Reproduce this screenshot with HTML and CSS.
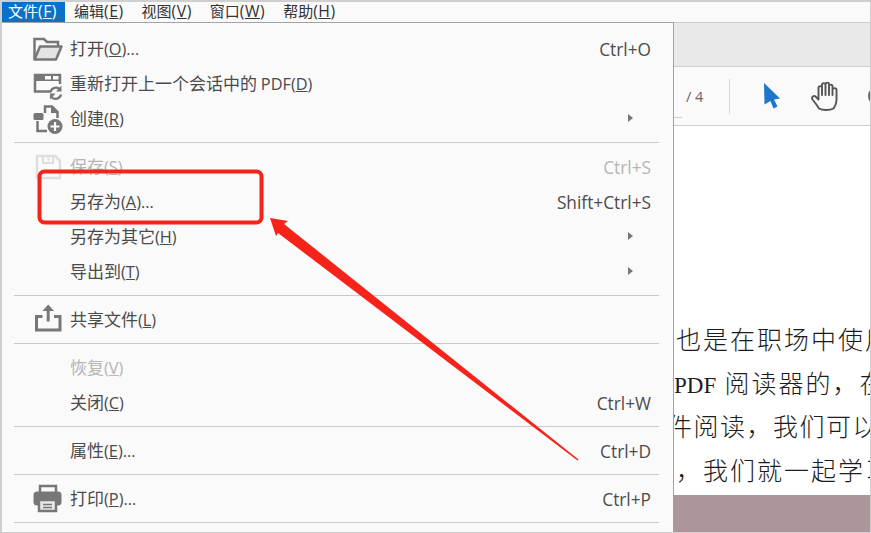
FILE: index.html
```html
<!DOCTYPE html>
<html lang="zh-CN">
<head>
    <meta charset="UTF-8">
    <title>文件菜单</title>
    <link rel="stylesheet" href="styles.css">
</head>
<body>
    <div class="window">
        <nav class="menubar">
            <span class="menubar-item active">文件<span class="key">(<u>F</u>)</span></span>
            <span class="menubar-item">编辑<span class="key">(<u>E</u>)</span></span>
            <span class="menubar-item">视图<span class="key">(<u>V</u>)</span></span>
            <span class="menubar-item">窗口<span class="key">(<u>W</u>)</span></span>
            <span class="menubar-item">帮助<span class="key">(<u>H</u>)</span></span>
        </nav>
        <div class="tab-strip"></div>
        <div class="toolbar">
            <div class="page-input"></div>
            <span class="page-total">/ 4</span>
            <div class="divider"></div>
            <svg class="tool-pointer" width="18" height="26" viewBox="0 0 18 26"><path d="M1 0 L17 15.5 L11 16.5 L14.5 23.5 L10.5 25.5 L7.5 18 L1.5 21.5 Z" fill="#1f74cc"/></svg>
            <svg class="tool-hand" width="30" height="30" viewBox="0 0 30 30"><path d="M8 27.5 C6 24 3.5 21 1.5 18.5 C0 16.5 2.5 14 4.5 15.5 L7.5 18.5 V7 C7.5 4.5 11 4.5 11 7 V14 V4 C11 1.5 14.5 1.5 14.5 4 V14 V3.5 C14.5 1 18 1 18 3.500 V14 V5.500 C18 3 21.500 3 21.500 5.500 V14 V9 C21.500 6.500 25.500 6.500 25.500 9 V19 C25.500 24 23.500 26 22.500 27.500 C19 29.500 11 29.500 8 27.500 Z" fill="none" stroke="#555" stroke-width="1.900" stroke-linejoin="round"/></svg>
            <svg class="tool-zoom" width="20" height="20" viewBox="0 0 20 20"><circle cx="10" cy="10" r="8" fill="none" stroke="#666" stroke-width="2"/></svg>
        </div>
        <div class="page">
            <div class="page-text">
                <p class="line line-a">也是在职场中使用</p>
                <p class="line line-b"><span class="latin">PDF</span> 阅读器的，在</p>
                <p class="line line-c">件阅读，我们可以</p>
                <p class="line line-d">，我们就一起学习</p>
            </div>
            <div class="page-photo"></div>
        </div>

        <div class="menu">
            <div class="row">
                <svg class="icon" viewBox="0 0 30 30"><path d="M1.500 24.500 V4 H11 L14 7 H25 V11" fill="none" stroke="#777" stroke-width="2.500"/><path d="M1.500 24.500 H23 L28.500 11.500 H7 Z" fill="#e4e4e4" stroke="#777" stroke-width="2.500" stroke-linejoin="round"/></svg>
                <span class="label">打开<span class="key">(<u>O</u>)...</span></span>
                <span class="shortcut">Ctrl+O</span>
            </div>
            <div class="row">
                <svg class="icon" viewBox="0 0 30 30"><path d="M18 21.500 H2 V5 H27 V14" fill="none" stroke="#777" stroke-width="2.500"/><path d="M2 5 H27 V11 H2 Z" fill="#777"/><path d="M12 6 H18 V9.500 H12 Z M20 6 H25.500 V9.500 H20 Z" fill="#fafafa"/><path d="M17.500 22 A5.500 5.500 0 0 1 27 19.500 M28 24.500 A5.500 5.500 0 0 1 18.500 27" fill="none" stroke="#777" stroke-width="2.300"/><path d="M28.500 15.500 V21.500 H23 Z M17 29.500 V23.500 H22.500 Z" fill="#777"/></svg>
                <span class="label">重新打开上一个会话中的 <span class="key">PDF(<u>D</u>)</span></span>
            </div>
            <div class="row">
                <svg class="icon" viewBox="0 0 30 30"><path d="M12 8 V1.500 H19 L24.500 7 V13" fill="none" stroke="#777" stroke-width="2.500"/><path d="M18 1 V8 H25 Z" fill="#777"/><rect x="0.500" y="8" width="10" height="7" rx="1.500" fill="#777"/><path d="M4.500 16 V26 H14" fill="none" stroke="#777" stroke-width="2.500"/><circle cx="22" cy="21.500" r="7.500" fill="#777"/><path d="M22 17 V26 M17.500 21.500 H26.500" stroke="#fafafa" stroke-width="2.200"/></svg>
                <span class="label">创建<span class="key">(<u>R</u>)</span></span>
                <span class="submenu-arrow"></span>
            </div>
            <div class="sep"></div>
            <div class="row disabled">
                <svg class="icon" viewBox="0 0 30 30"><path d="M4 3 H22 L27 8 V25 H4 Z" fill="none" stroke="#dedede" stroke-width="2.500" stroke-linejoin="round"/><path d="M10 3 V10 H20 V3 M15.500 5 V8" fill="none" stroke="#dedede" stroke-width="2"/></svg>
                <span class="label">保存<span class="key">(<u>S</u>)</span></span>
                <span class="shortcut">Ctrl+S</span>
            </div>
            <div class="row">
                <span class="icon"></span>
                <span class="label">另存为<span class="key">(<u>A</u>)...</span></span>
                <span class="shortcut">Shift+Ctrl+S</span>
            </div>
            <div class="row">
                <span class="icon"></span>
                <span class="label">另存为其它<span class="key">(<u>H</u>)</span></span>
                <span class="submenu-arrow"></span>
            </div>
            <div class="row">
                <span class="icon"></span>
                <span class="label">导出到<span class="key">(<u>T</u>)</span></span>
                <span class="submenu-arrow"></span>
            </div>
            <div class="sep"></div>
            <div class="row">
                <svg class="icon" viewBox="0 0 30 30"><path d="M9.500 10.500 H3.500 V24 H27 V10.500 H21" fill="none" stroke="#777" stroke-width="3"/><path d="M15.200 4 V15.500" stroke="#777" stroke-width="3"/><path d="M15.200 -1.500 L21 5 H9.500 Z" fill="#777"/></svg>
                <span class="label">共享文件<span class="key">(<u>L</u>)</span></span>
            </div>
            <div class="sep"></div>
            <div class="row disabled">
                <span class="icon"></span>
                <span class="label">恢复<span class="key">(<u>V</u>)</span></span>
            </div>
            <div class="row">
                <span class="icon"></span>
                <span class="label">关闭<span class="key">(<u>C</u>)</span></span>
                <span class="shortcut">Ctrl+W</span>
            </div>
            <div class="sep"></div>
            <div class="row">
                <span class="icon"></span>
                <span class="label">属性<span class="key">(<u>E</u>)...</span></span>
                <span class="shortcut">Ctrl+D</span>
            </div>
            <div class="sep"></div>
            <div class="row">
                <svg class="icon" viewBox="0 0 30 30"><path d="M7 8 V1 H23 V8" fill="none" stroke="#777" stroke-width="2.500"/><rect x="0.500" y="6.500" width="28" height="14" rx="3.500" fill="#777"/><path d="M6 15 H23 V26 H6 Z" fill="#e8e8e8" stroke="#777" stroke-width="2.500"/><path d="M10 19.500 H19 M10 22.500 H19" stroke="#777" stroke-width="1.400"/></svg>
                <span class="label">打印<span class="key">(<u>P</u>)...</span></span>
                <span class="shortcut">Ctrl+P</span>
            </div>
            <div class="sep"></div>
        </div>

        <!-- red annotation drawn over the screenshot -->
        <svg class="annotation" width="871" height="533" viewBox="0 0 871 533">
            <rect x="39.500" y="171.500" width="222" height="51" rx="5" fill="none" stroke="#f5231a" stroke-width="4"/>
            <path d="M270 218 L288 221 L284 224 L578.500 459.500 L577.500 460.500 L278 233 L276 236 Z" fill="#f5231a"/>
        </svg>
    </div>
</body>
</html>
```

FILE: styles.css
```css
* {
    box-sizing: border-box;
}

body {
    margin: 0;
    background: #fff;
    font-family: 'Noto Sans CJK SC', sans-serif;
    color: #4b4b4b;
}

.window {
    position: relative;
    width: 871px;
    height: 533px;
    display: flex;
    flex-direction: column;
    overflow: hidden;
    border-top: 2px solid #cfcfcf;
    border-left: 2px solid #cfcfcf;
    border-right: 1px solid #cfcfcf;
    border-bottom: 1px solid #cfcfcf;
}

/* menu bar */
.menubar {
    display: flex;
    height: 21px;
    background: #fafafa;
    border-bottom: 1px solid #cdcdcd;
    font-size: 15px;
    line-height: 18px;
}

.menubar-item {
    padding: 0 9px 0 9px;
    color: #333;
    white-space: nowrap;
}

    .menubar-item.active {
        width: 63px;
        padding-left: 6px;
        background: #0a72c6;
        color: #fff;
    }

    .menubar-item .key {
        font-size: 1.05em;
        letter-spacing: 0.5px;
    }

.key {
    font-family: 'Open Sans', sans-serif;
    font-size: 0.96em;
}

.tab-strip {
    height: 44px;
    background: #e9e9e9;
    border-bottom: 1px solid #cfcfcf;
}

/* toolbar behind the menu */
.toolbar {
    height: 59px;
    display: flex;
    align-items: center;
    overflow: hidden;
    padding-left: 640px;
    background: #fafafa;
    border-bottom: 1px solid #cdcdcd;
}

.page-input {
    width: 40px;
    height: 22px;
    margin-top: 22px;
    border-bottom: 1px solid #cfcfcf;
    flex-shrink: 0;
}

.page-total {
    margin-left: 4px;
    width: 43px;
    font-family: 'Open Sans', sans-serif;
    font-size: 14.500px;
    color: #666;
    flex-shrink: 0;
}

.divider {
    width: 1px;
    height: 35px;
    background: #d8d8d8;
    flex-shrink: 0;
}

.tool-pointer {
    margin-left: 33px;
    flex-shrink: 0;
}

.tool-hand {
    margin-left: 30px;
    flex-shrink: 0;
}

.tool-zoom {
    margin-left: 26px;
    flex-shrink: 0;
}

/* document page */
.page {
    flex: 1;
    display: flex;
    flex-direction: column;
    background: #fff;
}

.page-text {
    padding: 193px 0 0 672px;
    height: 369px;
    overflow: hidden;
}

.line {
    margin: 0;
    height: 43.500px;
    line-height: 43.500px;
    font-family: 'Liberation Serif', 'Noto Sans CJK SC', serif;
    font-size: 25px;
    font-weight: 300;
    letter-spacing: 2px;
    color: #1c1c1c;
    white-space: nowrap;
}

.latin {
    font-size: 23px;
    letter-spacing: 0;
}

.line-a {
    padding-left: 2px;
}

.line-c {
    margin-left: -7px;
    letter-spacing: 1.500px;
}

.line-d {
    padding-left: 2px;
}

.page-photo {
    flex: 1;
    background: #ad9699;
}

/* file menu, open over the window */
.menu {
    position: absolute;
    left: 0;
    top: 20px;
    width: 672px;
    height: 510px;
    padding-top: 9px;
    background: #fafafa;
    border-top: 1px solid #a3a3a3;
    border-right: 1px solid #a3a3a3;
}

.row {
    height: 35px;
    display: flex;
    align-items: center;
    padding: 0 20px 0 31px;
    font-size: 17px;
    white-space: nowrap;
}

    .row.disabled {
        color: #b5b5b5;
    }

.icon {
    width: 30px;
    height: 30px;
    margin-right: 7px;
    flex-shrink: 0;
    overflow: visible;
}

.label {
    flex: 1;
    margin-bottom: 4px;
}

.shortcut {
    margin-right: 2px;
    margin-bottom: 1px;
    font-family: 'Open Sans', sans-serif;
    font-size: 17.300px;
}

.submenu-arrow {
    width: 0;
    height: 0;
    margin-right: 20px;
    margin-bottom: 3px;
    border-left: 5px solid #777;
    border-top: 4px solid transparent;
    border-bottom: 4px solid transparent;
}

.sep {
    height: 1px;
    margin: 5px 14px 7px 12px;
    background: #cacaca;
}

.annotation {
    position: absolute;
    left: -2px;
    top: -2px;
    pointer-events: none;
}
```
